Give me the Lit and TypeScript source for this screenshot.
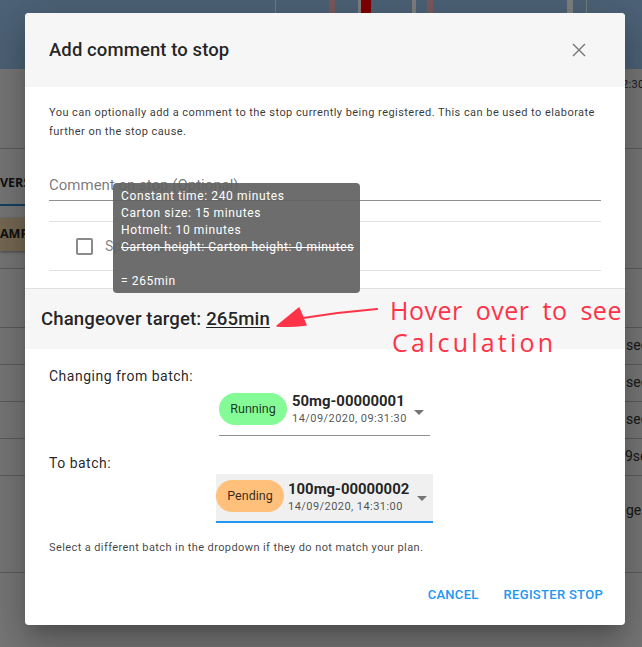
import { LitElement, html, css } from "lit";
import { customElement } from "lit/decorators.js";

const STRIPES = [
  { x: 275, w: 1, c: "#deffff" },
  { x: 329, w: 6, c: "#f4b4b8" },
  { x: 358, w: 3, c: "#ffffff" },
  { x: 361, w: 10, c: "#ff0000" },
  { x: 412, w: 4, c: "#ffffff" },
  { x: 427, w: 6, c: "#f4b4b8" },
  { x: 567, w: 6, c: "#ffffff" },
  { x: 586, w: 1, c: "#deffff" },
];

@customElement("app-root")
export class AppRoot extends LitElement {
  static styles = css`
    :host {
      display: block;
      position: relative;
      width: 642px;
      height: 647px;
      overflow: hidden;
      font-family: Roboto, "Liberation Sans", sans-serif;
      background: #eeeeee;
      color: rgba(0, 0, 0, 0.87);
    }
    /* page behind the dialog */
    .topbar { position: relative; height: 69px; background: #9ac4ee; }
    .stripe { position: absolute; top: 0; bottom: 0; }
    .row {
      box-sizing: border-box;
      border-bottom: 1px solid #b9b9b9;
      white-space: nowrap;
      overflow: hidden;
      font-size: 14px;
      color: #333;
      display: flex;
      align-items: center;
      padding-left: 626px;
      padding-bottom: 2px;
    }
    .time { height: 80px; font-size: 11px; align-items: flex-start; padding-top: 9px; padding-left: 622px; letter-spacing: .3px; }
    .tab { height: 57px; padding: 0; border-bottom: 0; align-items: stretch; }
    .tabitem {
      box-sizing: border-box;
      width: 120px;
      padding-top: 25px;
      font-family: "Open Sans", sans-serif;
      font-size: 12.5px;
      font-weight: 700;
      color: #222;
      border-bottom: 2px solid #2a80c4;
    }
    .tanrow { height: 63px; padding: 12px 0 0 0; align-items: flex-start; }
    .tan {
      width: 120px; height: 33px; background: #ecd2a8; font-weight: 700;
      font-family: "Open Sans", sans-serif;
      font-size: 12.5px; line-height: 31px; color: #222;
      box-shadow: 0 1px 3px rgba(0, 0, 0, .4);
    }
    .r58 { height: 59px; }
    .r37 { height: 37px; }
    .r97 { height: 97px; align-items: flex-start; padding-top: 26px; }
    .backdrop { position: absolute; inset: 0; background: rgba(0, 0, 0, 0.5); }

    /* dialog */
    .dialog {
      position: absolute;
      left: 25px;
      top: 13px;
      width: 600px;
      height: 612px;
      background: #fff;
      border-radius: 4px;
      overflow: hidden;
      display: flex;
      flex-direction: column;
    }
    .shadow {
      position: absolute; left: 25px; top: 13px; width: 600px; height: 612px; border-radius: 4px;
      box-shadow: 0 11px 15px -7px rgba(0,0,0,.2), 0 24px 38px 3px rgba(0,0,0,.14), 0 9px 46px 8px rgba(0,0,0,.12);
    }
    .head {
      height: 74px;
      flex: none;
      background: #f6f6f6;
      display: flex;
      align-items: center;
      justify-content: space-between;
      padding: 0 34px 0 24px;
    }
    h2 { margin: 0; font-size: 18.5px; font-weight: 500; letter-spacing: 0.1px; color: rgba(0,0,0,.87); }
    .close { display: block; width: 24px; height: 24px; fill: none; stroke: #757575; stroke-width: 1.4; }
    .intro {
      margin: 16px 24px 0;
      font-size: 11px;
      line-height: 19px;
      letter-spacing: 0.45px;
      color: rgba(0,0,0,.8);
    }
    .comment {
      box-sizing: border-box;
      margin: 28px 24px 0;
      height: 32px;
      border-bottom: 1px solid #8f8f8f;
      font-size: 15px;
      line-height: 32px;
      color: rgba(0,0,0,.54);
    }
    .check {
      box-sizing: border-box;
      margin: 20px 24px 0;
      height: 50px;
      border-top: 1px solid #e0e0e0;
      border-bottom: 1px solid #e0e0e0;
      display: flex;
      align-items: center;
      padding-left: 28px;
      gap: 12px;
      font-size: 14px;
      color: rgba(0,0,0,.5);
    }
    .box { width: 13px; height: 13px; border: 2px solid #8a8a8a; border-radius: 2px; margin-left: -1px; }
    .target {
      box-sizing: border-box;
      margin-top: 17px;
      height: 61px;
      flex: none;
      background: #f6f6f6;
      border-top: 1px solid #e0e0e0;
      display: flex;
      align-items: center;
      padding-left: 16px;
      font-size: 18.6px;
      letter-spacing: 0.12px;
      font-weight: 500;
      color: rgba(0,0,0,.87);
      white-space: pre;
    }
    .target u { text-underline-offset: 2px; }
    .batches { padding: 17px 24px 0; display: flex; flex-direction: column; }
    .label { font-size: 14px; line-height: 20px; letter-spacing: 0.5px; height: 20px; color: rgba(0,0,0,.87); }
    .selwrap { display: flex; justify-content: center; }
    .select {
      box-sizing: border-box;
      display: flex;
      align-items: flex-start;
      position: relative;
      margin-left: -1px;
    }
    .select.from { margin-top: 5px; width: 211px; height: 45px; padding-top: 2px; border-bottom: 1px solid #8f8f8f; }
    .select.to {
      margin-top: 1px; width: 217px; height: 49px; padding-top: 6px;
      background: #f0f0f0; border-bottom: 2px solid #2196f3;
    }
    .chip {
      flex: none;
      box-sizing: border-box;
      width: 68px; height: 32px;
      border-radius: 16px;
      font-size: 12.5px;
      line-height: 32px;
      text-align: center;
      color: rgba(0,0,0,.8);
    }
    .chip.green { background: #85fb98; }
    .chip.orange { background: #ffc07c; }
    .info { margin-left: 5px; display: flex; flex-direction: column; }
    .to .info { margin-left: 4px; }
    .name { font-size: 14.9px; line-height: 18px; font-weight: 700; color: rgba(0,0,0,.87); margin-top: -1px; }
    .to .name { margin-top: 0; }
    .date { font-size: 11px; line-height: 18px; letter-spacing: 0.45px; color: rgba(0,0,0,.7); }
    .caret {
      position: absolute; width: 0; height: 0;
      border-left: 5px solid transparent; border-right: 5px solid transparent; border-top: 5px solid #757575;
      right: 6px; top: 19px;
    }
    .to .caret { right: 6px; top: 22px; }
    .hint {
      margin-top: 16px; font-size: 11px; line-height: 18px; letter-spacing: 0.4px; color: rgba(0,0,0,.75);
    }
    .actions {
      margin-top: auto;
      height: 62px;
      display: flex;
      align-items: center;
      justify-content: flex-end;
      gap: 25px;
      padding: 0 22px 0 0;
      box-sizing: border-box;
    }
    .btn { font-size: 13px; font-weight: 500; letter-spacing: 0.3px; color: #2196f3; }
    /* overlays */
    .tip {
      position: absolute;
      left: 113px;
      top: 183px;
      box-sizing: border-box;
      width: 247px;
      height: 110px;
      padding: 5px 8px;
      border-radius: 4px;
      background: rgba(97, 97, 97, 0.92);
      color: #fff;
      font-size: 12px;
      font-weight: 400;
      line-height: 17px;
      letter-spacing: 0.62px;
      white-space: nowrap;
    }
    .tip s, .tip div { display: block; min-height: 17px; }
    .note {
      position: absolute;
      left: 390px;
      top: 294px;
      color: #ff3348;
      font-family: "Open Sans", sans-serif;
      font-weight: 400;
      font-size: 25px;
      line-height: 32px;
      letter-spacing: 0.5px;
      word-spacing: 6px;
      white-space: nowrap;
    }
    .note .second { display: block; letter-spacing: 3.2px; margin-left: 2px; }
    .arrow { position: absolute; left: 270px; top: 295px; width: 120px; height: 40px; }
  `;

  render() {
    return html`
      <div class="page">
        <div class="topbar">
          ${STRIPES.map(
            (s) => html`<div class="stripe" style="left:${s.x}px;width:${s.w}px;background:${s.c}"></div>`
          )}
        </div>
        <div class="row time">2:30</div>
        <div class="row tab"><div class="tabitem">VERS</div></div>
        <div class="row tanrow"><div class="tan">AMP</div></div>
        <div class="row r58"></div>
        <div class="row r37">sec</div>
        <div class="row r37">sec</div>
        <div class="row r37">sec</div>
        <div class="row r37" style="padding-left:625px">9sec</div>
        <div class="row r97">ge:</div>
      </div>
      <div class="backdrop"></div>
      <div class="shadow"></div>
      <div class="dialog">
        <div class="head">
          <h2>Add comment to stop</h2>
          <svg class="close" viewBox="0 0 24 24">
            <path d="M6 6 18 18M18 6 6 18" />
          </svg>
        </div>
        <div class="intro">
          You can optionally add a comment to the stop currently being registered. This can be used to elaborate
          further on the stop cause.
        </div>
        <div class="comment">Comment on stop (Optional)</div>
        <div class="check"><span class="box"></span><span>Split stop</span></div>
        <div class="target">Changeover target: <u>265min</u></div>
        <div class="batches">
          <div class="label">Changing from batch:</div>
          <div class="selwrap">
            <div class="select from">
              <div class="chip green">Running</div>
              <div class="info">
                <span class="name">50mg-00000001</span>
                <span class="date">14/09/2020, 09:31:30</span>
              </div>
              <span class="caret"></span>
            </div>
          </div>
          <div class="label" style="margin-top:17px">To batch:</div>
          <div class="selwrap">
            <div class="select to">
              <div class="chip orange">Pending</div>
              <div class="info">
                <span class="name">100mg-00000002</span>
                <span class="date">14/09/2020, 14:31:00</span>
              </div>
              <span class="caret"></span>
            </div>
          </div>
          <div class="hint">Select a different batch in the dropdown if they do not match your plan.</div>
        </div>
        <div class="actions">
          <span class="btn">CANCEL</span>
          <span class="btn">REGISTER STOP</span>
        </div>
      </div>
      <div class="tip">
        <div>Constant time: 240 minutes</div>
        <div>Carton size: 15 minutes</div>
        <div>Hotmelt: 10 minutes</div>
        <s>Carton height: Carton height: 0 minutes</s>
        <div></div>
        <div>= 265min</div>
      </div>
      <svg class="arrow" viewBox="270 295 120 40">
        <path d="M277 326 L299 308 L306 325 Q290 327 277 326 Z" fill="#ff3348" stroke="#ff3348" stroke-width="1.5" stroke-linejoin="round" />
        <path d="M303 318 Q340 312 377 309" fill="none" stroke="#ff3348" stroke-width="2.2" stroke-linecap="round" />
      </svg>
      <div class="note">Hover over to see<span class="second">Calculation</span></div>
    `;
  }
}
